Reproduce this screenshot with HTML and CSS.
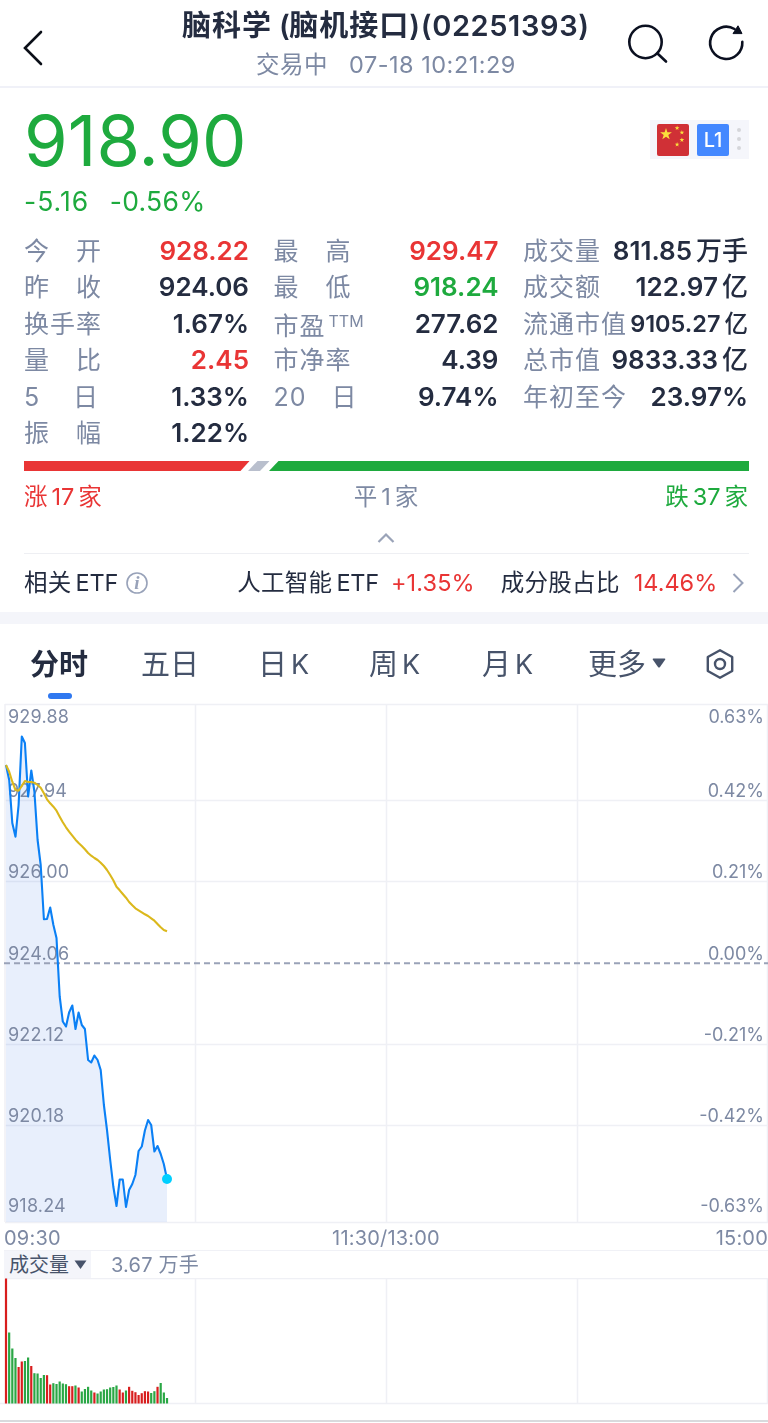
FILE: index.html
```html
<!DOCTYPE html>
<html lang="zh-CN">

<head>
    <meta charset="UTF-8">
    <meta name="viewport" content="width=device-width, initial-scale=1.0">
    <title>脑科学 (脑机接口)</title>
    <link rel="stylesheet" href="styles.css">
</head>

<body>
    <header class="header">
        <svg class="back" width="24" height="38" viewBox="0 0 24 38"><path d="M20 3 4 19l16 16"/></svg>
        <div class="title-box">
            <h1>脑科学<span class="paren"> (</span>脑机接口<span class="code">)(02251393)</span></h1>
            <div class="status"><span>交易中</span><span class="time">07-18 10:21:29</span></div>
        </div>
        <div class="tools">
            <svg class="search" width="44" height="44" viewBox="0 0 44 44"><circle cx="19.500" cy="20" r="16.200"/><path d="m31.500 31.500 8.500 8"/></svg>
            <svg class="refresh" width="40" height="44" viewBox="0 0 40 44"><path class="arc" d="M37.300 19.800A16.100 16.100 0 1 1 29.500 7"/><path class="head" d="M33 3.800 37 11.600h-9z"/></svg>
        </div>
    </header>

    <section class="quote">
        <div class="price-box">
            <div class="price">918.90</div>
            <div class="change"><span>-5.16</span><span>-0.56%</span></div>
        </div>
        <div class="badges">
            <svg width="32" height="32" viewBox="0 0 32 32">
                <rect width="32" height="32" rx="2" fill="#d03036"/>
                <g fill="#fbe03c">
                    <path id="star" d="m9 4 1.400 4.300h4.500l-3.600 2.700 1.400 4.300L9 12.700l-3.700 2.600L6.700 11 3.100 8.300h4.500z"/>
                    <use href="#star" transform="translate(16.500 0) scale(.4)"/>
                    <use href="#star" transform="translate(21.300 4.500) scale(.4)"/>
                    <use href="#star" transform="translate(21.300 11.800) scale(.4)"/>
                    <use href="#star" transform="translate(16.500 16.400) scale(.4)"/>
                </g>
            </svg>
            <span class="level">L1</span>
            <svg class="dots" width="4" height="24" viewBox="0 0 4 24"><circle cx="2" cy="3" r="2"/><circle cx="2" cy="12" r="2"/><circle cx="2" cy="21" r="2"/></svg>
        </div>
    </section>

    <section class="stats">
        <div class="stat"><span class="label wide">今 开</span><b class="up">928.22</b></div>
        <div class="stat"><span class="label wide">最 高</span><b class="up">929.47</b></div>
        <div class="stat"><span class="label">成交量</span><b>811.85<i>万手</i></b></div>

        <div class="stat"><span class="label wide">昨 收</span><b>924.06</b></div>
        <div class="stat"><span class="label wide">最 低</span><b class="down">918.24</b></div>
        <div class="stat"><span class="label">成交额</span><b>122.97<i>亿</i></b></div>

        <div class="stat"><span class="label">换手率</span><b>1.67%</b></div>
        <div class="stat"><span class="label ttm">市盈<sup>TTM</sup></span><b>277.62</b></div>
        <div class="stat"><span class="label">流通市值</span><b class="small">9105.27<i>亿</i></b></div>

        <div class="stat"><span class="label wide">量 比</span><b class="up">2.45</b></div>
        <div class="stat"><span class="label">市净率</span><b>4.39</b></div>
        <div class="stat"><span class="label">总市值</span><b>9833.33<i>亿</i></b></div>

        <div class="stat"><span class="label wide five">5 日</span><b>1.33%</b></div>
        <div class="stat"><span class="label wide twenty">20 日</span><b>9.74%</b></div>
        <div class="stat"><span class="label">年初至今</span><b>23.97%</b></div>

        <div class="stat"><span class="label wide">振 幅</span><b>1.22%</b></div>
    </section>

    <section class="breadth">
        <svg width="725" height="10" viewBox="0 0 725 10">
            <path fill="#e93535" d="M0 0h225.500l-9 10H0z"/>
            <path fill="#b9bfcd" d="M233.500 0h12l-9.500 10h-12z"/>
            <path fill="#1eaa3e" d="M254.500 0H725v10H245z"/>
        </svg>
        <div class="counts">
            <span class="up">涨<em>17</em>家</span>
            <span class="flat">平<em>1</em>家</span>
            <span class="down">跌<em>37</em>家</span>
        </div>
        <svg class="fold" width="20" height="12" viewBox="0 0 20 12"><path d="m2.500 10 7.500-7.500 7.500 7.500"/></svg>
    </section>

    <section class="etf">
        <span class="etf-name">相关<em>ETF</em></span>
        <svg class="info" width="22" height="22" viewBox="0 0 22 22">
            <circle cx="11" cy="11" r="10"/>
            <text x="11" y="17">i</text>
        </svg>
        <span class="etf-fund">人工智能<em>ETF</em></span>
        <span class="etf-num up">+1.35%</span>
        <span class="etf-share">成分股占比</span>
        <span class="etf-num up">14.46%</span>
        <svg class="more" width="12" height="22" viewBox="0 0 12 22"><path d="m1.500 2 9 9-9 9"/></svg>
    </section>

    <nav class="tabs">
        <span class="tab active">分时</span>
        <span class="tab">五日</span>
        <span class="tab">日<em>K</em></span>
        <span class="tab">周<em>K</em></span>
        <span class="tab">月<em>K</em></span>
        <span class="tab">更多<svg width="14" height="10" viewBox="0 0 14 10"><path d="M1.300.5h11.400q1.200 0 .4 1.200L8 8.900q-1 1.200-2 0L.9 1.700Q.1.500 1.300.5z"/></svg></span>
        <svg class="setting" width="30" height="32" viewBox="0 0 30 32"><path d="M15 2.300 27.200 9v14L15 29.700 2.800 23V9z"/><circle cx="15" cy="16" r="5"/></svg>
    </nav>

    <svg class="chart" id="price-chart" width="768" height="550" viewBox="0 700 768 550">
        <g class="grid">
            <path d="M5 704.500h763M5 800.500h763M5 881.500h763M5 1044.500h763M5 1125.500h763M5 1222.500h763"/>
            <path d="M5 704v518M195.500 704v518M386.500 704v518M577.500 704v518M767.500 704v518"/>
        </g>
        <path class="area" id="price-area"/>
        <path class="base" d="M4 963.300h764"/>
        <g class="axis">
            <text x="8" y="722.500">929.88</text>
            <text x="8" y="797">927.94</text>
            <text x="8" y="878.300">926.00</text>
            <text x="8" y="959.500">924.06</text>
            <text x="8" y="1040.800">922.12</text>
            <text x="8" y="1121.800">920.18</text>
            <text x="8" y="1212.300">918.24</text>
        </g>
        <g class="axis right">
            <text x="764" y="722.500">0.63%</text>
            <text x="764" y="797">0.42%</text>
            <text x="764" y="878.300">0.21%</text>
            <text x="764" y="959.500">0.00%</text>
            <text x="764" y="1040.800">-0.21%</text>
            <text x="764" y="1121.800">-0.42%</text>
            <text x="764" y="1212.300">-0.63%</text>
        </g>
        <polyline class="price-line" id="price-line"/>
        <polyline class="avg-line" id="avg-line"/>
        <circle cx="167" cy="1179" r="5" fill="#00cfff"/>
        <g class="axis times">
            <text x="4" y="1245">09:30</text>
            <text x="386" y="1245" text-anchor="middle">11:30/13:00</text>
            <text x="768" y="1245" text-anchor="end">15:00</text>
        </g>
    </svg>

    <div class="volume-head">
        <span class="volume-name">成交量<svg width="13" height="10" viewBox="0 0 13 10"><path d="M.5.500h12L6.500 9z"/></svg></span>
        <span class="volume-value">3.67 万手</span>
    </div>
    <svg class="chart" id="volume-chart" width="768" height="142" viewBox="0 1278 768 142">
        <path class="grid" d="M5 1278.500h763M0 1403.500h768M195.500 1278v125M386.500 1278v125M577.500 1278v125M767.500 1278v125"/>
        <g id="volume-bars"></g>
    </svg>
    <div class="bottom-line"></div>

    <script src="chart.js"></script>
</body>

</html>
```
FILE: styles.css
```css
* {
    box-sizing: border-box;
}

body {
    margin: 0;
    width: 768px;
    height: 1423px;
    overflow: hidden;
    background: #fff;
    color: #242c40;
    font-family: Inter, "Noto Sans CJK SC", sans-serif;
}

svg {
    display: block;
    flex: none;
}

em, i {
    font-style: normal;
}

.up {
    color: #e93535;
}

.down {
    color: #1eaa3e;
}

.header {
    display: grid;
    grid-template-columns: 182px 408px 178px;
    height: 88px;
    border-bottom: 2px solid #f0f1f8;
}

.back {
    margin: 29px 0 0 21px;
    fill: none;
    stroke: #0b0f18;
    stroke-width: 2.6;
    stroke-linecap: round;
}

.title-box {
    white-space: nowrap;
}

h1 {
    margin: 0;
    padding-top: 1px;
    height: 48px;
    font-size: 29px;
    line-height: 49px;
    font-weight: 600;
    letter-spacing: 1px;
}

.paren {
    letter-spacing: -0.4px;
}

.code {
    letter-spacing: 0.6px;
}

.status {
    display: flex;
    justify-content: center;
    gap: 21px;
    font-size: 23.500px;
    line-height: 33px;
    color: #7d89a3;
    letter-spacing: 0.5px;
}

.tools {
    display: flex;
    padding: 22px 0 0 36px;
    gap: 36px;
}

.search, .refresh .arc {
    fill: none;
    stroke: #0b1020;
    stroke-width: 2.6;
    stroke-linecap: round;
}

.refresh {
    margin-left: -1px;
}

.refresh .head {
    fill: #0b1020;
    stroke: #0b1020;
    stroke-linejoin: round;
}

.quote {
    display: flex;
    justify-content: space-between;
    height: 144px;
    padding: 12px 19px 0 24px;
    color: #1eaa3e;
}

.price {
    font-size: 70.500px;
    line-height: 81px;
    height: 80px;
}

.change {
    display: flex;
    gap: 20.500px;
    font-size: 26.500px;
    line-height: 42px;
    letter-spacing: 0.3px;
}

.change span:first-child {
    letter-spacing: 1px;
}

.badges {
    display: flex;
    align-items: center;
    gap: 8px;
    margin-top: 20px;
    height: 39px;
    width: 99px;
    padding-left: 7px;
    background: #f5f6fb;
}

.level {
    width: 32px;
    height: 32px;
    border-radius: 2px;
    background: #4488ff;
    color: #fff;
    font-size: 20px;
    font-weight: 500;
    line-height: 32px;
    text-align: center;
}

.dots {
    fill: #d5d6da;
    margin-top: -2px;
}

.stats {
    display: grid;
    grid-template-columns: 225px 225px 225px;
    column-gap: 24.500px;
    grid-auto-rows: 36.400px;
    padding-left: 24px;
    height: 228.500px;
}

.stat {
    display: flex;
    justify-content: space-between;
    line-height: 38px;
    white-space: nowrap;
}

.label {
    color: #7d89a3;
    font-size: 25px;
    letter-spacing: 1px;
}

.wide {
    width: 78px;
    text-align: justify;
    text-align-last: justify;
}

.five {
    width: 75px;
}

.twenty {
    width: 84px;
}

.ttm {
    padding-top: 2px;
}

sup {
    font-size: 16px;
    line-height: 0;
    vertical-align: 8px;
    margin-left: 3px;
    letter-spacing: 0;
}

.stat b {
    font-size: 26px;
    font-weight: 600;
}

.stat i {
    margin-left: 4px;
    font-weight: 500;
}

.stat .small {
    font-size: 23.500px;
}

.breadth {
    height: 92px;
    padding-left: 24px;
}

.counts {
    display: grid;
    grid-template-columns: 1fr 1fr 1fr;
    width: 724px;
    font-size: 23.500px;
    line-height: 52px;
}

.counts em {
    margin: 0 4px;
}

.counts span:nth-child(2) {
    text-align: center;
}

.counts span:nth-child(3) {
    text-align: right;
}

.flat {
    color: #7d89a3;
}

.fold {
    margin: 9px 0 0 352px;
    fill: none;
    stroke: #9aa3b8;
    stroke-width: 2.2;
}

.etf {
    display: flex;
    align-items: center;
    margin-left: 24px;
    width: 725px;
    height: 59px;
    border-top: 1px solid #eeeff3;
    font-size: 23.500px;
    line-height: 28px;
    letter-spacing: 0.3px;
    white-space: nowrap;
}

.etf span {
    height: 28px;
}

.etf em {
    margin-left: 4px;
    letter-spacing: -0.2px;
}

.info {
    margin-left: 8px;
}

.info circle {
    fill: none;
    stroke: #98a2b9;
    stroke-width: 1.6;
}

.info text {
    fill: #98a2b9;
    font: italic bold 19px "Liberation Serif", serif;
    text-anchor: middle;
}

.etf-fund {
    margin-left: 89px;
}

.etf-num {
    margin-left: 12px;
    letter-spacing: 0.1px;
}

.etf-share {
    margin-left: 26px;
}

.etf-share + .etf-num {
    margin-left: 14px;
    letter-spacing: 0;
}

.more {
    margin-left: 15px;
    fill: none;
    stroke: #98a2b9;
    stroke-width: 2;
}

.tabs {
    display: grid;
    grid-template-columns: 111px 117px 111px 113px 106px 117px 30px;
    height: 88px;
    padding-left: 30px;
    border-top: 12px solid #f4f5fa;
    font-size: 29px;
    line-height: 70px;
    color: #47536a;
    white-space: nowrap;
}

.tab {
    position: relative;
    display: flex;
    align-items: center;
    padding-top: 6px;
}

.tab em {
    margin-left: 4px;
    font-size: 27px;
}

.tab svg {
    margin-left: 6px;
    margin-top: -4px;
    fill: #47536a;
}

.tab.active {
    color: #242c40;
    font-weight: 700;
}

.tab.active::after {
    content: "";
    position: absolute;
    left: 18px;
    bottom: 1px;
    width: 24px;
    height: 6px;
    border-radius: 3px;
    background: #2f78f0;
}

.setting {
    align-self: center;
    margin-top: 4px;
    fill: none;
    stroke: #47536a;
    stroke-width: 2.4;
    stroke-linejoin: round;
}

.grid {
    fill: none;
    stroke: #eff0f5;
    stroke-width: 1.5;
}

.area {
    fill: #e8effc;
    mix-blend-mode: multiply;
}

.base {
    stroke: #9aa3b8;
    stroke-width: 2;
    stroke-dasharray: 6 4;
}

.axis {
    fill: #7d89a3;
    font-size: 18px;
    letter-spacing: 0.2px;
}

.right {
    text-anchor: end;
    letter-spacing: 0;
}

.times {
    font-size: 20px;
    letter-spacing: 0.2px;
}

.price-line, .avg-line {
    fill: none;
    stroke: #0b80f5;
    stroke-width: 2.1;
    stroke-linejoin: round;
}

.avg-line {
    stroke: #dbb81c;
}

.volume-head {
    display: flex;
    margin-left: 4px;
    height: 28px;
    border-top: 1px solid #f0f1f6;
    font-size: 20px;
    line-height: 29px;
    color: #7d89a3;
}

.volume-name {
    display: flex;
    align-items: center;
    gap: 5px;
    width: 87px;
    padding: 2px 0 0 5px;
    background: #f4f5fa;
    color: #47536a;
}

.volume-name svg {
    fill: #47536a;
}

.volume-value {
    margin-left: 20px;
    letter-spacing: 0.2px;
}

.bottom-line {
    height: 2px;
    background: #d9dadd;
}
```
FILE: chart.js
```js
const LEFT = 6;
const STEP = 3.157;
const BOTTOM = 1222;
const VOLUME_BOTTOM = 1403.5;

const prices = [
    765, 780, 823, 836.7, 805, 736.5, 743, 796.5, 770.5, 791.5, 840, 865, 919.3, 919, 907.5, 925, 938,
    996.5, 1021.5, 1026.5, 1012.5, 1005.5, 1029, 1012.5, 1025, 1029, 1060, 1062.5, 1055.5, 1060, 1070,
    1105, 1130, 1160, 1186.5, 1206, 1179.5, 1179.5, 1207, 1190, 1184, 1175, 1151, 1146.5, 1130.5, 1120,
    1125, 1151.5, 1146, 1154, 1164, 1179
];

const averages = [
    765, 771.7, 781.7, 790, 790.7, 786, 781, 782, 782, 782.7, 785, 787.7, 793.3, 799.3, 803.3, 806.7,
    810.7, 816.7, 822.3, 827.3, 831.7, 835.7, 839.7, 843, 846, 849.3, 853, 855.7, 858, 860, 862.7, 866,
    870, 875, 880.3, 886.7, 890.3, 894, 897.7, 902, 905.3, 908.3, 910.3, 912.3, 914.3, 916, 918.3,
    920.7, 924, 927.3, 930, 931.3
];

const volumes = [
    125, 71, 55, 45.5, 36.5, 42, 42.5, 46, 37.5, 30.3, 30, 25.5, 28.5, 28.3, 19, 20.3, 19.5, 22, 20,
    19.3, 17.3, 17.3, 18, 16, 12, 14.5, 16.7, 13, 11, 10, 12, 14, 14.3, 16, 16.5, 18, 14, 11, 13, 16.7,
    12.7, 11.3, 8.5, 10.3, 12.3, 12, 10.5, 12.3, 16.7, 20.5, 11, 5.5
];

// r = up, g = down
const sides = 'rgggrrggrggggrrggggg' + 'rrgrggggrggggggg' + 'rrgrrrrrrrggrggg';

const toPoints = values => values.map((y, i) => `${(LEFT + i * STEP).toFixed(1)},${y}`).join(' ');

document.getElementById('price-line').setAttribute('points', toPoints(prices));
document.getElementById('avg-line').setAttribute('points', toPoints(averages));
document.getElementById('price-area').setAttribute('d', `M${LEFT} ${BOTTOM}L${toPoints(prices)} 167,${BOTTOM}z`);

const bars = document.getElementById('volume-bars');
volumes.forEach((height, i) => {
    const bar = document.createElementNS('http://www.w3.org/2000/svg', 'rect');
    bar.setAttribute('x', LEFT - 1.1 + i * STEP);
    bar.setAttribute('y', VOLUME_BOTTOM - height);
    bar.setAttribute('width', 2.2);
    bar.setAttribute('height', height);
    bar.setAttribute('fill', sides[i] === 'r' ? '#d81e1e' : '#2aa745');
    bars.appendChild(bar);
});
```
